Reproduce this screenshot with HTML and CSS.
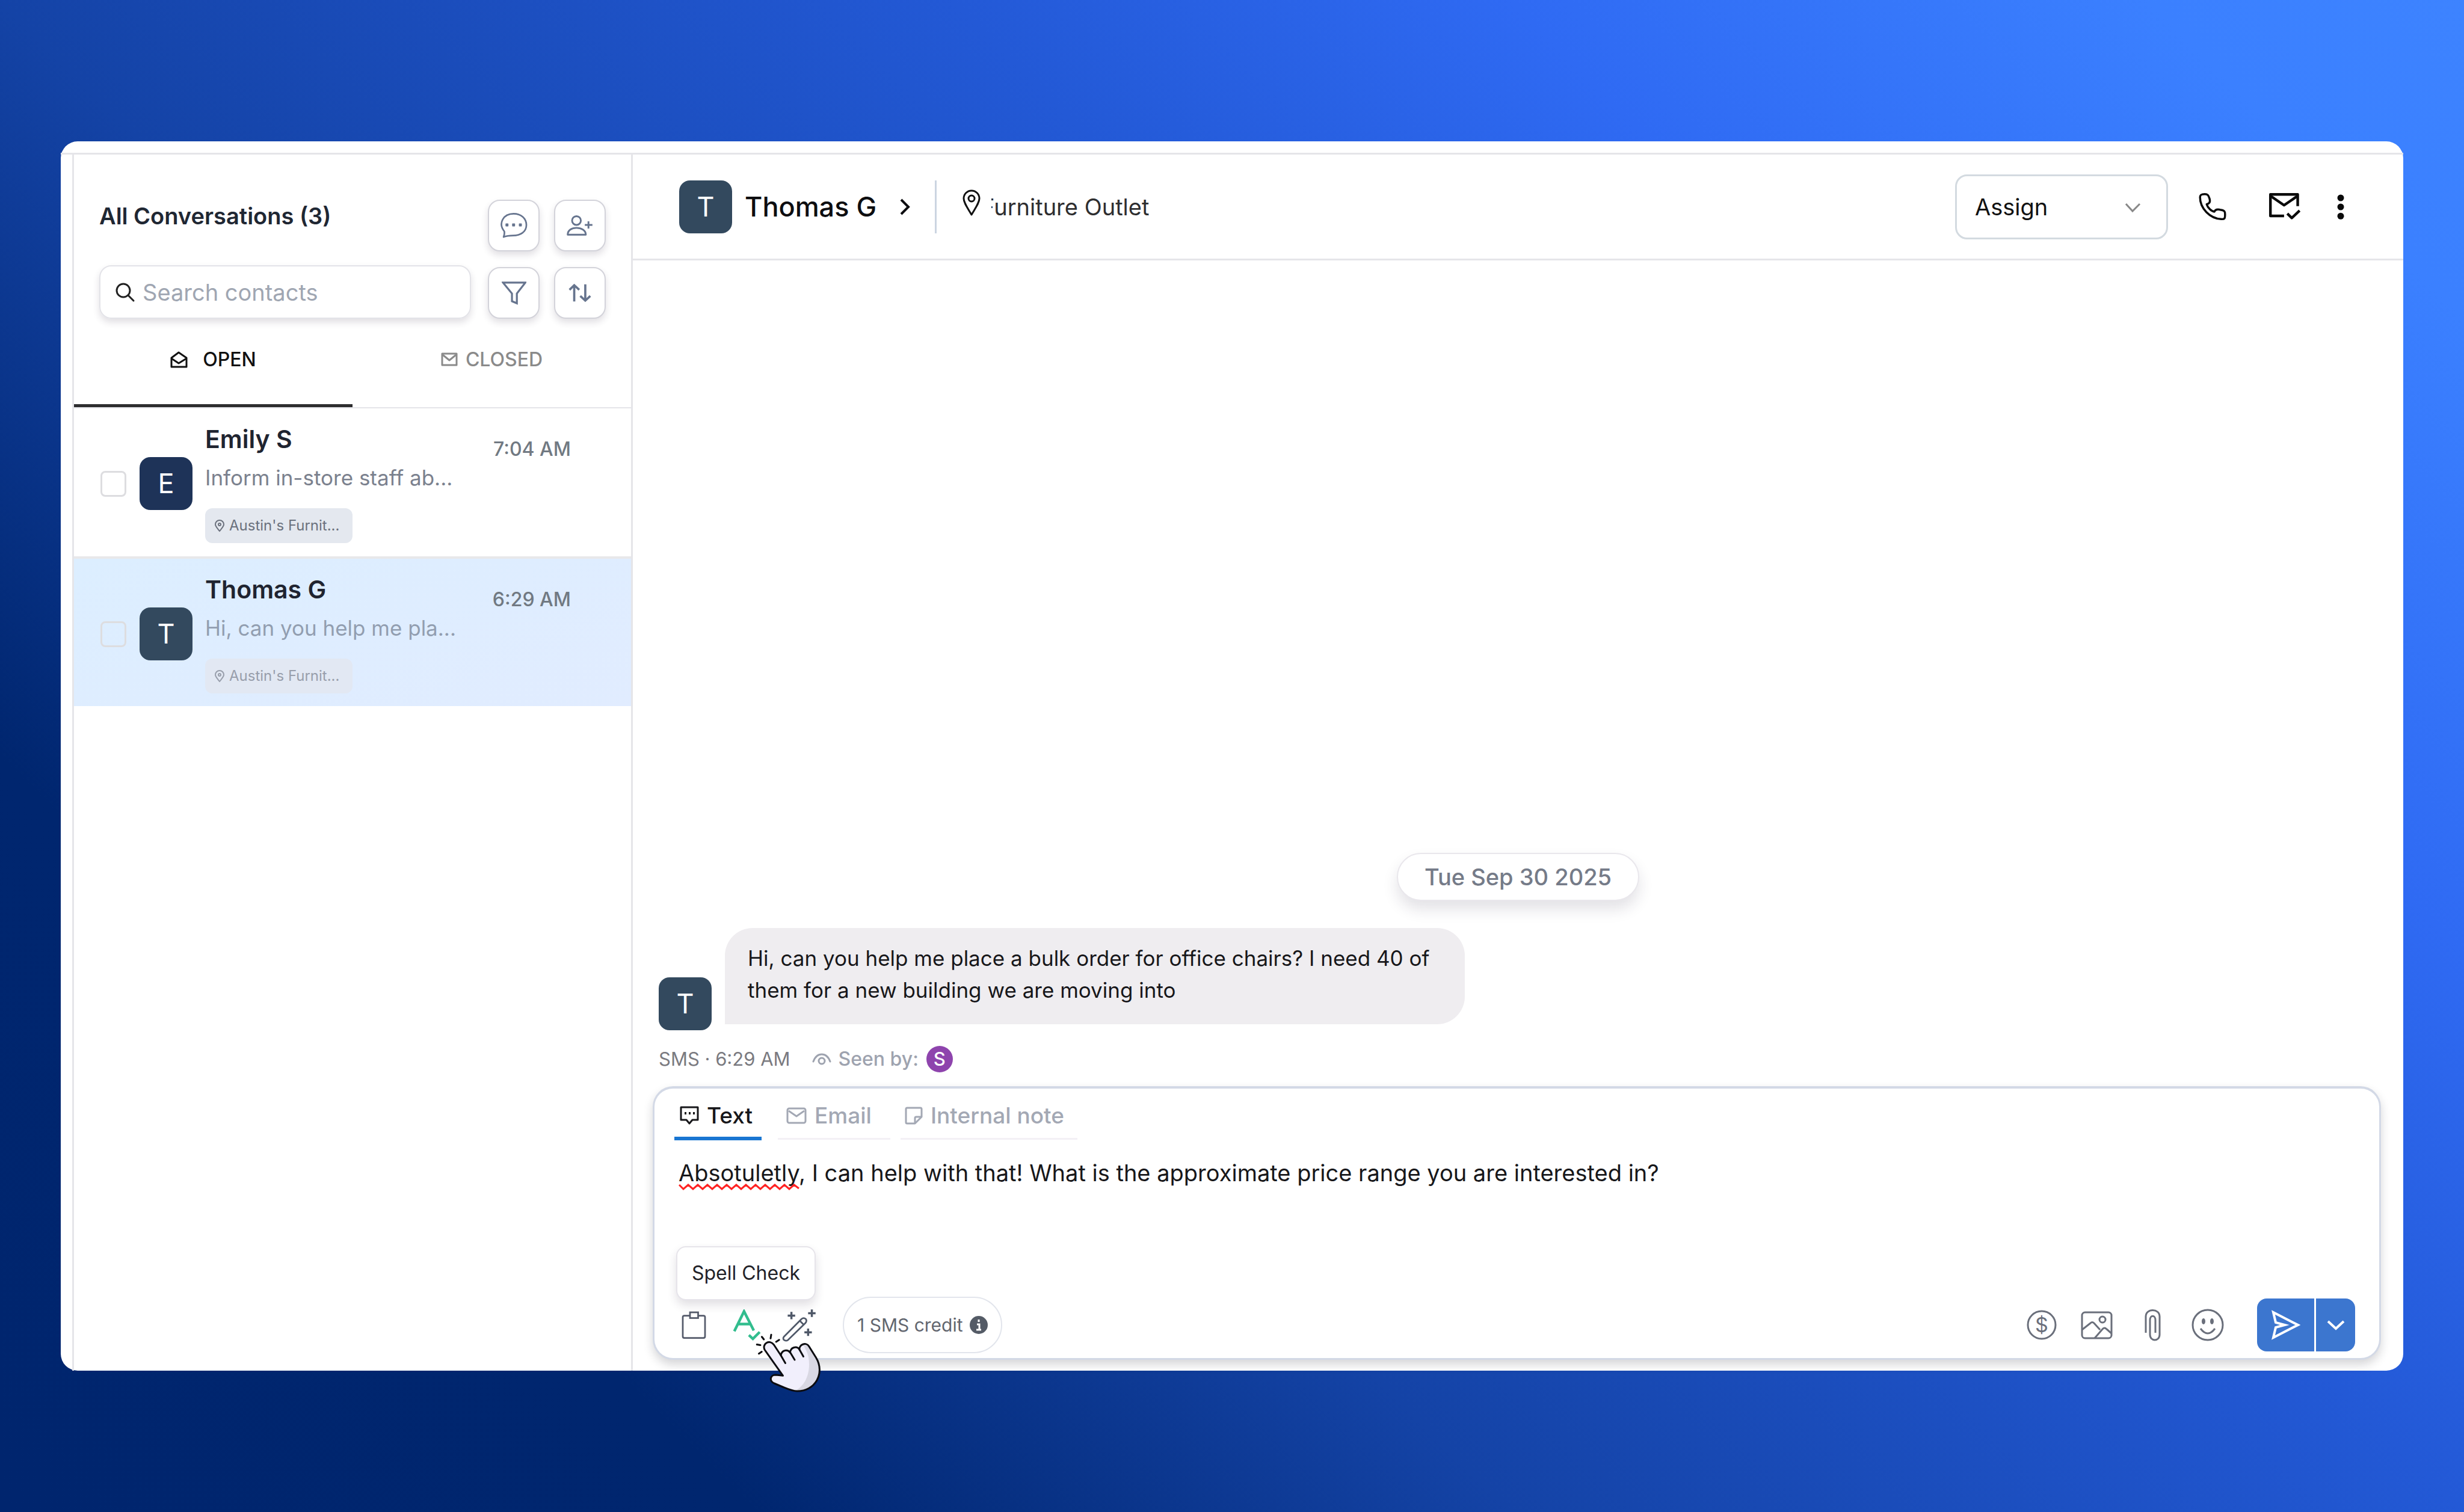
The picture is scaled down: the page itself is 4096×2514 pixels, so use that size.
FILE: index.html
```html
<!DOCTYPE html>
<html lang="en">
<head>
<meta charset="utf-8">
<title>All Conversations</title>
<link rel="stylesheet" href="styles.css">
</head>
<body>
<div class="card">
  <div class="topbar"></div>
  <div class="workspace">
    <aside class="sidebar">
      <div class="side-head">
        <h1 class="side-title">All Conversations (3)</h1>
        <button class="tool" type="button" aria-label="New message">
          <svg width="46" height="44" viewBox="120 143 188 178" fill="none" stroke="currentColor" stroke-width="11" stroke-linejoin="round"><path d="M150 272C105 215 145 152 213 152C265 152 300 185 300 228C300 275 260 300 210 300C190 300 165 302 145 310Q153 290 150 272Z"/><g fill="currentColor" stroke="none"><rect x="158" y="218" width="20" height="20" rx="4"/><rect x="203" y="218" width="20" height="20" rx="4"/><rect x="249" y="218" width="20" height="20" rx="4"/></g></svg>
        </button>
        <button class="tool" type="button" aria-label="Add contact">
          <svg width="46" height="36" viewBox="563 153 187 148" fill="none" stroke="currentColor" stroke-width="12" stroke-linejoin="round"><circle cx="633" cy="193" r="30"/><path d="M573 290C573 258 600 243 633 243C665 243 697 258 697 290Z"/><path d="M715 198V248M690 223H742"/></svg>
        </button>
        <label class="search">
          <svg width="34" height="34" viewBox="0 0 34 34" fill="none" stroke="#222" stroke-width="3" stroke-linecap="round"><circle cx="14" cy="14" r="11"/><path d="M22 22L31 31"/></svg>
          <input class="search-input" type="text" placeholder="Search contacts" aria-label="Search contacts">
        </label>
        <button class="tool" type="button" aria-label="Filter">
          <svg width="41" height="41" viewBox="130 595 166 166" fill="none" stroke="currentColor" stroke-width="13"><path d="M139 607H289L232 680V746L199 732V680Z"/></svg>
        </button>
        <button class="tool" type="button" aria-label="Sort">
          <svg width="38" height="32" viewBox="580 615 155 130" fill="none" stroke="currentColor" stroke-width="15"><path d="M619 738V625M587 659L619 628L653 659M694 622V735M660 701L694 732L728 701"/></svg>
        </button>
      </div>
      <div class="status-tabs">
        <button class="status status-on" type="button">
          <svg width="29" height="29" viewBox="0 0 29 29" fill="none" stroke="currentColor" stroke-width="3" stroke-linejoin="round"><path d="M2 11L14 2L27 11V26H2Z"/><path d="M2 12L14 20L27 12"/></svg>
          OPEN
        </button>
        <button class="status" type="button">
          <svg width="28" height="24" viewBox="0 0 28 24" fill="none" stroke="currentColor" stroke-width="3" stroke-linejoin="round"><rect x="2" y="2" width="24" height="19"/><path d="M3 4L14 13L25 4"/></svg>
          CLOSED
        </button>
      </div>
      <div class="row">
        <input class="tick" type="checkbox" aria-label="Select Emily S">
        <span class="avatar avatar-navy">E</span>
        <div class="row-text">
          <h2 class="name">Emily S</h2>
          <p class="preview">Inform in-store staff ab...</p>
          <span class="tag"><svg width="16" height="21" viewBox="0 0 16 21" fill="none" stroke="currentColor" stroke-width="2"><path d="M8 19C4 14 1 11 1 8A7 7 0 0 1 15 8C15 11 12 14 8 19Z"/><circle cx="8" cy="8" r="2"/></svg>Austin's Furnit...</span>
        </div>
        <time class="time">7:04 AM</time>
      </div>
      <div class="row row-on">
        <input class="tick" type="checkbox" aria-label="Select Thomas G">
        <span class="avatar">T</span>
        <div class="row-text">
          <h2 class="name">Thomas G</h2>
          <p class="preview">Hi, can you help me pla...</p>
          <span class="tag"><svg width="16" height="21" viewBox="0 0 16 21" fill="none" stroke="currentColor" stroke-width="2"><path d="M8 19C4 14 1 11 1 8A7 7 0 0 1 15 8C15 11 12 14 8 19Z"/><circle cx="8" cy="8" r="2"/></svg>Austin's Furnit...</span>
        </div>
        <time class="time">6:29 AM</time>
      </div>
    </aside>

    <main class="thread">
      <header class="thread-head">
        <span class="avatar">T</span>
        <button class="person" type="button">Thomas G
          <svg width="18" height="30" viewBox="0 0 18 30" fill="none" stroke="currentColor" stroke-width="4"><path d="M3 3L15 15L3 27"/></svg>
        </button>
        <div class="place">
          <svg width="30" height="60" viewBox="0 0 30 60" fill="none" stroke="#111" stroke-width="3" stroke-linejoin="round"><path d="M15 43C8 31 2 23 2 16A13 13 0 0 1 28 16C28 23 22 31 15 43Z"/><circle cx="15" cy="16" r="5"/></svg>
          <span class="place-window"><span class="place-name">Furniture Outlet</span></span>
        </div>
        <div class="head-actions">
          <div class="assign">
            <select class="assign-select" aria-label="Assign"><option>Assign</option></select>
            <svg class="assign-arrow" width="27" height="17" viewBox="0 0 27 17" fill="none" stroke="#888" stroke-width="3"><path d="M2 2L13 14L25 2"/></svg>
          </div>
          <button class="bare call" type="button" aria-label="Call">
            <svg width="48" height="48" viewBox="70 92 195 195" fill="none" stroke="#0a0a0a" stroke-width="14" stroke-linejoin="round"><path d="M83 125C83 105 98 103 115 103C135 103 140 112 146 130C155 155 148 165 128 172C135 195 160 220 180 222C185 208 200 203 225 210C250 215 252 222 252 240C252 268 250 274 225 272C150 268 83 200 83 125Z"/></svg>
          </button>
          <button class="bare mark" type="button" aria-label="Close conversation">
            <svg width="53" height="47" viewBox="545 98 215 190" fill="none" stroke="#0a0a0a" stroke-width="18" stroke-linejoin="round"><path d="M742 190V111H558V256H650"/><path d="M560 122L650 184L740 122M672 240L702 270L755 220"/></svg>
          </button>
          <button class="bare" type="button" aria-label="More">
            <svg width="14" height="42" viewBox="1004 100 56 168" fill="#0a0a0a"><circle cx="1032" cy="124" r="22"/><circle cx="1032" cy="184" r="22"/><circle cx="1032" cy="245" r="22"/></svg>
          </button>
        </div>
      </header>

      <section class="messages">
        <time class="date">Tue Sep 30 2025</time>
        <div class="message">
          <span class="avatar">T</span>
          <p class="bubble">Hi, can you help me place a bulk order for office chairs? I need 40 of them for a new building we are moving into</p>
        </div>
        <div class="meta">
          <span>SMS · 6:29 AM</span>
          <span class="seen">
            <svg width="32" height="20" viewBox="0 0 32 20" fill="none" stroke="currentColor" stroke-width="3" stroke-linecap="round"><path d="M2 14C8 -2 24 -2 30 14"/><circle cx="16" cy="13" r="5"/></svg>
            Seen by:
          </span>
          <span class="seen-by">S</span>
        </div>
      </section>

      <form class="composer">
        <div class="kinds">
          <button class="kind kind-text" type="button">
            <svg width="32" height="32" viewBox="0 0 32 32" fill="none" stroke="currentColor" stroke-width="3" stroke-linejoin="round"><path d="M2 2H30V23H21L16 29L11 23H2Z"/><path d="M8 12h3M15 12h3M22 12h3" stroke-width="4"/></svg>
            Text
          </button>
          <button class="kind kind-email" type="button">
            <svg width="34" height="28" viewBox="0 0 34 28" fill="none" stroke="currentColor" stroke-width="3" stroke-linejoin="round"><rect x="2" y="2" width="30" height="24" rx="3"/><path d="M4 6L17 15L30 6"/></svg>
            Email
          </button>
          <button class="kind kind-note" type="button">
            <svg width="30" height="30" viewBox="0 0 30 30" fill="none" stroke="currentColor" stroke-width="3" stroke-linejoin="round"><path d="M4 2H26Q28 2 28 4V17L17 28H4Q2 28 2 26V4Q2 2 4 2Z"/><path d="M17 28V19Q17 17 19 17H28"/></svg>
            Internal note
          </button>
        </div>
        <div class="field">
          <textarea class="field-text" aria-label="Message" spellcheck="false">Absotuletly, I can help with that! What is the approximate price range you are interested in?</textarea>
          <svg class="misspelt" width="202" height="12" viewBox="0 0 202 12" fill="none" stroke="#f22" stroke-width="3"><path d="M1 3L8 10L16 3L24 10L32 3L40 10L48 3L56 10L64 3L72 10L80 3L88 10L96 3L104 10L112 3L120 10L128 3L136 10L144 3L152 10L160 3L168 10L176 3L184 10L192 3L200 9"/></svg>
        </div>
        <div class="bar">
          <button class="bare clip" type="button" aria-label="Templates">
            <svg width="41" height="46" viewBox="80 118 164 184" fill="none" stroke="#555b6b" stroke-width="11"><path d="M134 148H98Q88 148 88 158V286Q88 296 98 296H226Q236 296 236 286V158Q236 148 226 148H190"/><rect x="136" y="126" width="54" height="38"/></svg>
          </button>
          <div class="spell">
            <button class="bare" type="button" aria-label="Spell Check">
              <svg width="47" height="52" viewBox="424 108 190 212" fill="none" stroke="#32bd8e" stroke-width="18"><path d="M434 257L500 122L566 252M462 208H542M533 283L560 308L606 262"/></svg>
            </button>
            <span class="tip" role="tooltip">Spell Check</span>
            <svg class="hand" width="109" height="100" viewBox="580 260 436 400" fill="none" stroke="#0c0c10" stroke-width="12" stroke-linejoin="round" stroke-linecap="round">
              <path fill="#f1effc" stroke="none" d="M762 545L640 372C622 335 672 300 702 340L748 410C755 370 795 370 810 392C812 355 855 345 872 372C868 340 915 318 935 350L982 425C1045 530 975 650 855 648C825 648 790 632 760 620L708 598C665 580 680 540 712 540Q735 542 762 545Z"/>
              <path fill="#d9d8e3" stroke="none" d="M898 340L935 350L982 425C1040 530 975 645 848 643C945 590 950 450 920 385Z"/>
              <path d="M762 545L640 372C622 335 672 300 702 340L748 410C755 370 795 370 810 392C812 355 855 345 872 372C868 340 915 318 935 350L982 425C1045 530 975 650 855 648C825 648 790 632 760 620L708 598C665 580 680 540 712 540Q735 542 762 545Z"/>
              <path d="M748 410L778 462M810 390L840 440M872 372L898 418"/>
              <path d="M622 287L635 304M684 273L680 297M737 307L717 320M589 338L612 342M621 386L602 399"/>
            </svg>
          </div>
          <button class="bare wand" type="button" aria-label="Improve with AI">
            <svg width="57" height="55" viewBox="755 92 230 222" fill="none" stroke="#4f5868" stroke-width="11"><path d="M768 280L885 162Q900 148 915 162Q924 176 910 190L795 302Q780 312 766 300Q760 288 768 280Z"/><path d="M874 173L900 199"/><path stroke-width="14" d="M818 113V163M793 138H843M955 97V147M930 122H980M930 225V275M905 250H955"/></svg>
          </button>
          <span class="credit">1 SMS credit
            <svg width="30" height="30" viewBox="0 0 30 30"><circle cx="15" cy="15" r="15" fill="#545b66"/><path d="M15 6V10M12 14H16V22M11 23H19" stroke="#fff" stroke-width="3" fill="none"/></svg>
          </span>
          <div class="bar-right">
            <button class="bare pay" type="button" aria-label="Request payment">
              <svg width="50" height="50" viewBox="0 0 50 50" fill="none" stroke="currentColor" stroke-width="3"><circle cx="25" cy="25" r="23"/><text class="dollar" x="25" y="37" text-anchor="middle">$</text></svg>
            </button>
            <button class="bare picture" type="button" aria-label="Add picture">
              <svg width="53" height="47" viewBox="0 0 53 47" fill="none" stroke="currentColor" stroke-width="3" stroke-linejoin="round"><rect x="2" y="2" width="49" height="43" rx="5"/><circle cx="36" cy="14" r="5"/><path d="M2 31L16 20Q19 17 22 20L32 31M23 45L36 30Q39 26 43 30L51 37"/></svg>
            </button>
            <button class="bare attach" type="button" aria-label="Attach file">
              <svg width="27" height="54" viewBox="0 0 27 54" fill="none" stroke="currentColor" stroke-width="3"><path d="M2 40V13C2 -1 25 -1 25 13V43C25 55 9 55 9 43V19C9 10 18 10 18 19V40"/></svg>
            </button>
            <button class="bare smile" type="button" aria-label="Emoji">
              <svg width="54" height="54" viewBox="0 0 54 54" fill="none" stroke="currentColor" stroke-width="3"><circle cx="27" cy="27" r="25"/><path d="M15 33Q27 49 39 33"/><g fill="currentColor" stroke="none"><ellipse cx="20" cy="21" rx="3" ry="5"/><ellipse cx="34" cy="21" rx="3" ry="5"/></g></svg>
            </button>
            <div class="send-group">
              <button class="send" type="submit" aria-label="Send">
                <svg width="48" height="50" viewBox="0 0 48 50" fill="none" stroke="#fff" stroke-width="4"><path d="M3 4L44 25L3 46L7 29L22 25L7 21Z"/></svg>
              </button>
              <button class="send-more" type="button" aria-label="Send options">
                <svg width="30" height="18" viewBox="0 0 30 18" fill="none" stroke="#fff" stroke-width="4"><path d="M2 3L15 15L28 3"/></svg>
              </button>
            </div>
          </div>
        </div>
      </form>
    </main>
  </div>
</div>
</body>
</html>
```
FILE: styles.css
```css
* { box-sizing: border-box; }

body {
  display: flex;
  min-height: 100vh;
  margin: 0;
  padding: 235px 101px;
  font-family: Inter, "Liberation Sans", sans-serif;
  color: #1f2430;
  background: linear-gradient(45deg, #00256e 0%, #00266f 19%, #1443a6 38%, #2359d6 62%, #2f6af3 76%, #3b80ff 92%, #3d83ff 100%);
}

h1, h2, p { margin: 0; }

button {
  margin: 0;
  font: inherit;
  color: inherit;
  cursor: pointer;
}

svg { display: block; flex: none; }

.card {
  display: flex;
  flex: 1;
  flex-direction: column;
  background: #fff;
  border-radius: 28px;
}

.topbar {
  height: 22px;
  border-bottom: 3px solid #e5e5e9;
}

.workspace {
  display: flex;
  flex: 1;
  margin-left: 19px;
  border-left: 3px solid #e5e5e9;
}

.sidebar {
  flex: none;
  width: 929px;
  border-right: 3px solid #e5e5e9;
}

.side-head {
  display: grid;
  grid-template-columns: minmax(0, 1fr) 86px 86px;
  gap: 23px 24px;
  padding: 75px 42px 0;
}

.side-title {
  font-size: 38px;
  font-weight: 600;
  line-height: 54px;
  color: #1f2733;
}

.tool {
  display: grid;
  place-items: center;
  align-self: end;
  height: 86px;
  padding: 0;
  color: #66748e;
  background: #fff;
  border: 2px solid #d3d3da;
  border-radius: 20px;
  box-shadow: 0 6px 12px rgba(40, 30, 60, 0.14);
}

.search {
  display: flex;
  align-items: center;
  gap: 12px;
  height: 89px;
  margin-right: 4px;
  padding: 0 24px;
  border: 2px solid #e3e3e8;
  border-radius: 20px;
  box-shadow: 0 6px 12px rgba(40, 30, 60, 0.14);
}

.search-input {
  flex: 1;
  min-width: 0;
  padding: 0;
  border: 0;
  outline: 0;
  background: none;
  font: 400 38px/56px Inter, "Liberation Sans", sans-serif;
  color: #1f2430;
}

.search-input::placeholder { color: #9fa6b2; opacity: 1; }

.status-tabs {
  display: flex;
  border-bottom: 2px solid #e5e5e9;
}

.status {
  display: flex;
  flex: 1;
  justify-content: center;
  align-items: center;
  gap: 13px;
  padding: 48px 0 54px;
  font-size: 32px;
  font-weight: 500;
  line-height: 40px;
  color: #8a8a8a;
  background: none;
  border: 0;
  border-bottom: 5px solid transparent;
}

.status-on {
  gap: 25px;
  color: #111;
  border-bottom-color: #2d2d2f;
}

.row {
  display: flex;
  align-items: center;
  padding: 26px 100px 22px 44px;
  border-bottom: 4px solid #e8e8ea;
}

.row-on {
  padding-bottom: 21px;
  border-bottom: 0;
  background: linear-gradient(160deg, #dceeff, #e1ecff);
}

.tick {
  flex: none;
  width: 43px;
  height: 43px;
  margin: 0 22px 0 0;
  appearance: none;
  border: 3px solid #dddde0;
  border-radius: 8px;
}

.avatar {
  display: grid;
  place-items: center;
  flex: none;
  width: 88px;
  height: 88px;
  border-radius: 18px;
  font-size: 45px;
  line-height: 50px;
  color: #fff;
  background: #33495e;
}

.avatar-navy { background: #1e3358; }

.row-text {
  display: flex;
  flex: 1;
  flex-direction: column;
  align-items: flex-start;
  min-width: 0;
  margin-left: 21px;
}

.name {
  font-size: 41px;
  font-weight: 600;
  line-height: 50px;
}

.preview {
  margin: 14px 0 26px;
  font-size: 35px;
  line-height: 50px;
  color: #7b818e;
}

.row-on .preview { color: #929eb0; }

.time {
  align-self: flex-start;
  padding-top: 22px;
  font-size: 32px;
  font-weight: 500;
  line-height: 40px;
  color: #717982;
}

.tag {
  display: flex;
  align-items: center;
  gap: 8px;
  width: 245px;
  height: 58px;
  padding: 0 16px;
  border-radius: 12px;
  font-size: 24px;
  line-height: 30px;
  white-space: nowrap;
  color: #6b717d;
  background: #e4e8ef;
}

.row-on .tag {
  color: #989eab;
  background: #e2e8f3;
}

.thread {
  display: flex;
  flex: 1;
  flex-direction: column;
  min-width: 0;
}

.thread-head {
  display: flex;
  align-items: center;
  height: 176px;
  padding: 0 97px 0 77px;
  border-bottom: 3px solid #e5e5e9;
}

.person {
  display: flex;
  align-items: center;
  gap: 38px;
  height: 88px;
  margin-left: 20px;
  padding: 0 41px 0 1px;
  border: 0;
  border-right: 3px solid #cbd5e1;
  background: none;
  font-size: 45px;
  font-weight: 500;
  color: #0d0d10;
}

.place {
  display: flex;
  align-items: center;
  gap: 18px;
  margin-left: 43px;
}

.place-window { overflow: hidden; }

.place-name {
  display: block;
  margin-left: -17px;
  font-size: 38px;
  line-height: 50px;
  white-space: nowrap;
  color: #2e2e30;
}

.head-actions {
  display: flex;
  align-items: center;
  margin-left: auto;
}

.assign { position: relative; }

.assign-select {
  width: 354px;
  height: 108px;
  padding: 0 90px 0 30px;
  appearance: none;
  border: 3px solid #d3dae0;
  border-radius: 20px;
  background: #fff;
  font: 400 38px/50px Inter, "Liberation Sans", sans-serif;
  color: #111;
}

.assign-arrow {
  position: absolute;
  top: 47px;
  right: 45px;
  pointer-events: none;
}

.bare {
  display: grid;
  place-items: center;
  flex: none;
  padding: 0;
  border: 0;
  background: none;
}

.call { margin-left: 50px; }
.mark { margin: 0 60px 0 69px; }

.messages {
  display: flex;
  flex: 1;
  flex-direction: column;
  justify-content: flex-end;
  padding: 0 43px 23px;
}

.date {
  align-self: center;
  padding: 0 44px;
  border: 2px solid #e9e7ec;
  border-radius: 40px;
  font-size: 38px;
  font-weight: 500;
  line-height: 76px;
  color: #757b88;
  background: #fff;
  box-shadow: 0 14px 24px rgba(40, 30, 60, 0.13);
}

.message {
  display: flex;
  align-items: flex-end;
  gap: 22px;
  margin: 45px 0 26px;
}

.bubble {
  width: 1230px;
  margin-bottom: 10px;
  padding: 24px 38px 30px 38px;
  border-radius: 46px 46px 46px 0;
  font-size: 35px;
  line-height: 53px;
  color: #17171a;
  background: #efedf0;
}

.meta {
  display: flex;
  align-items: center;
  font-size: 31px;
  line-height: 44px;
  color: #7a7a80;
}

.seen {
  display: flex;
  align-items: center;
  gap: 12px;
  margin: 0 13px 0 36px;
  font-size: 32px;
  font-weight: 500;
  color: #9ea3af;
}

.seen-by {
  width: 44px;
  height: 44px;
  border-radius: 50%;
  text-align: center;
  font-weight: 500;
  color: #fff;
  background: #8e44ad;
}

.composer {
  margin: 0 37px 18px 33px;
  padding: 20px 40px 8px 33px;
  border: 3px solid #d3d9e6;
  border-top-width: 4px;
  border-radius: 34px;
  background: #fff;
  box-shadow: 0 8px 16px rgba(30, 30, 40, 0.18);
}

.kinds {
  display: flex;
  align-items: flex-start;
}

.kind {
  display: flex;
  align-items: center;
  gap: 13px;
  padding: 0 0 12px;
  border: 0;
  border-bottom: 3px solid #f3f0f5;
  background: none;
  font-size: 37px;
  font-weight: 500;
  line-height: 50px;
  color: #a3a8b4;
}

.kind-text {
  padding: 0 15px 10px 9px;
  border-bottom: 6px solid #1976d2;
  color: #17171a;
}

.kind-email {
  margin: 0 17px 0 27px;
  padding-left: 14px;
  padding-right: 31px;
}

.kind-note {
  padding-left: 7px;
  padding-right: 22px;
}

.field { position: relative; }

.field-text {
  display: block;
  width: 100%;
  height: 260px;
  padding: 27px 0 0 7px;
  border: 0;
  outline: 0;
  resize: none;
  background: none;
  font: 400 38px/54px Inter, "Liberation Sans", sans-serif;
  color: #17171a;
}

.misspelt {
  position: absolute;
  top: 71px;
  left: 7px;
}

.bar {
  display: flex;
  align-items: center;
  padding-left: 12px;
}

.spell {
  position: relative;
  margin: 0 35px 0 44px;
}

.tip {
  position: absolute;
  left: -94px;
  bottom: calc(100% + 15px);
  width: 232px;
  border: 2px solid #e6e4ea;
  border-radius: 16px;
  text-align: center;
  font-size: 32px;
  line-height: 86px;
  color: #222228;
  background: #fff;
  box-shadow: 0 8px 16px rgba(40, 30, 60, 0.14);
}

.hand {
  position: absolute;
  top: 39px;
  left: 38px;
}

.credit {
  display: flex;
  align-items: center;
  gap: 11px;
  height: 94px;
  margin-left: 44px;
  padding: 0 22px;
  border: 2px solid #e2e5ec;
  border-radius: 47px;
  font-size: 30px;
  color: #62666f;
}

.bar-right {
  display: flex;
  align-items: center;
  margin-left: auto;
  color: #6a6f7b;
}

.dollar {
  font-size: 34px;
  fill: currentColor;
  stroke: none;
}

.picture { margin: 0 53px 0 40px; }
.smile { margin: 0 55px 0 51px; }

.send-group {
  display: flex;
  gap: 3px;
  height: 88px;
}

.send, .send-more {
  display: grid;
  place-items: center;
  width: 95px;
  padding: 0;
  border: 0;
  border-radius: 16px 0 0 16px;
  background: #3c76cf;
}

.send-more {
  width: 65px;
  border-radius: 0 16px 16px 0;
}
```
